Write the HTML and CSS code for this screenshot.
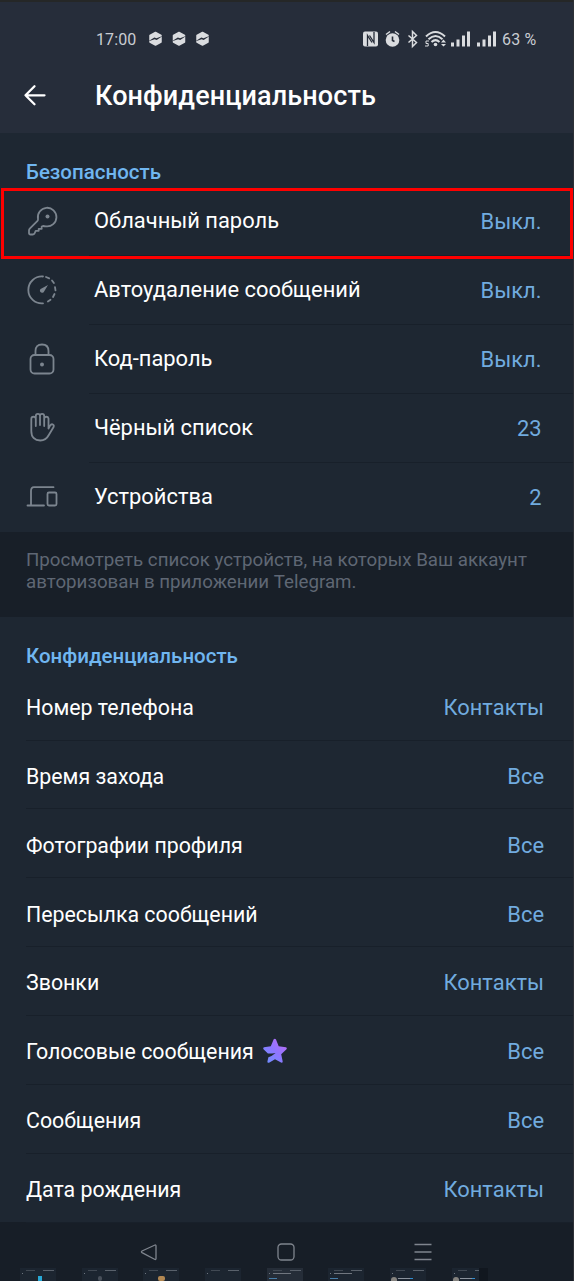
FILE: index.html
```
<!DOCTYPE html>
<html lang="ru">
<head>
<meta charset="utf-8">
<title>Конфиденциальность</title>
<link rel="stylesheet" href="styles.css">
</head>
<body>
<main class="screen">
  <header class="top">
    <div class="status">
      <span class="clock">17:00</span>
      <svg class="notices" width="64" height="16" viewBox="0 0 64 16">
        <defs><g id="notice"><path d="M7.500 1.500l5.500 3v6.500l-5.500 3-5.500-3v-6.500z" fill="#dadcdf" stroke="#dadcdf" stroke-width="1.500" stroke-linejoin="round"/><path d="M0 10.600L6.300 6.500 8.500 7.300 15 4.700 8.700 9 6.600 8.200z" fill="#262c38"/></g></defs>
        <use href="#notice"/><use href="#notice" x="23.500"/><use href="#notice" x="47"/>
      </svg>
      <svg class="signals" width="136" height="20" viewBox="0 0 136 20">
        <g fill="#dadcdf">
          <rect x="1" y="2.500" width="15" height="15" rx="2"/>
          <circle cx="30.500" cy="11" r="6.800"/>
          <g id="bars"><rect x="89" y="13.500" width="3" height="4"/><rect x="94.500" y="10.500" width="3" height="7"/><rect x="100" y="6.500" width="3" height="11"/><rect x="105" y="2.500" width="3" height="15"/></g>
          <use href="#bars" x="26"/>
          <circle cx="73.500" cy="15.500" r="1.800"/>
          <path d="M79 13.500l2.500-3 2.500 3zM79 15h5L81.500 17.500z"/>
        </g>
        <path d="M5.500 17V6.500l4.500 7M12 3v10.500L7.500 6.500" fill="none" stroke="#262c38" stroke-width="1.300"/>
        <path d="M30.500 7.500v4l2 1" fill="none" stroke="#262c38" stroke-width="1.600"/>
        <g fill="none" stroke="#dadcdf" stroke-width="1.500">
          <path d="M24 5.500l4-3M33 2.500l4 3M46.500 6.500l8 7-4 4v-15l4 4-8 7"/>
          <path d="M64 7.500q9.500-9 19 0M66.500 10.200q7-6.500 14 0M69.500 13q4-3.700 8 0" stroke-width="2"/>
          <path d="M67 12h-3v2.500h2.200V17H63" stroke-width="1"/>
        </g>
      </svg>
      <span class="charge">63 %</span>
    </div>
    <div class="bar">
      <svg class="back" width="24" height="24" viewBox="0 0 24 24"><path d="M22.500 12.300H3.500M12.500 3.300L3.500 12.300l9 9" fill="none" stroke="#fff" stroke-width="2.300" stroke-linecap="round" stroke-linejoin="round"/></svg>
      <h1 class="title">Конфиденциальность</h1>
    </div>
  </header>

  <section class="group security">
    <h2 class="heading">Безопасность</h2>
    <div class="row marked"><svg class="icon" viewBox="0 0 34 34"><path d="M4 29v-2.500q0-1.200 1-2.200l7.500-7.500q.7-.7.500-2A9.300 9.300 0 1 1 21 22.300q-1.500 0-3-.3l-1.300.5v2.300h-3v2h-3l-1.200 2.700q-.6 1-1.800 1H5.500q-1.500 0-1.500-1.500z"/><circle class="dot" cx="22.500" cy="12.500" r="2"/></svg><span class="label">Облачный пароль</span><span class="value">Выкл.</span></div>
    <div class="row"><svg class="icon" viewBox="0 0 34 34"><path d="M18 3.500A13.500 13.500 0 1 0 18 30.400"/><path d="M21 4l3.200 1.300M27 7.500l1.900 2.500M30 14.200l.5 3.200M29.500 21l-1.500 3M25.500 26.700l-2.600 1.800"/><path class="dot" d="M23 12l-6.500 3.400a2.200 2.200 0 1 0 2.600 3z"/></svg><span class="label">Автоудаление сообщений</span><span class="value">Выкл.</span></div>
    <div class="row"><svg class="icon" viewBox="0 0 34 34"><rect x="5.500" y="13" width="23" height="18.500" rx="4"/><path d="M10.500 13V9q0-6.500 6.500-6.500T23.500 9v4"/><circle class="dot" cx="17" cy="22.500" r="2"/></svg><span class="label">Код-пароль</span><span class="value">Выкл.</span></div>
    <div class="row"><svg class="icon" viewBox="0 0 34 34"><path d="M10.800 15V8a2.200 2.200 0 0 0-4.500 0V20c0 6.500 3.500 9.500 9 9.500 4.500 0 6.500-1.700 8.500-5.500l4.800-8q.8-2-1-2.700-1.500-.4-2.500 1.300L23.500 17.500V7.500a2.200 2.200 0 0 0-4.300 0V15M10.800 14V5a2.100 2.100 0 0 1 4.200 0v9M15 5a2.100 2.100 0 0 1 4.200 0v9"/></svg><span class="label">Чёрный список</span><span class="value">23</span></div>
    <div class="row"><svg class="icon" viewBox="0 0 34 34"><path d="M2.500 25.500H19M6 25.500V11q0-3.800 3-3.800h19.500"/><rect x="22.500" y="12.500" width="9" height="13" rx="1.500"/></svg><span class="label">Устройства</span><span class="value">2</span></div>
  </section>

  <p class="note">Просмотреть список устройств, на которых Ваш аккаунт<br>авторизован в приложении Telegram.</p>

  <section class="group privacy">
    <h2 class="heading">Конфиденциальность</h2>
    <div class="row"><span class="label">Номер телефона</span><span class="value">Контакты</span></div>
    <div class="row"><span class="label">Время захода</span><span class="value">Все</span></div>
    <div class="row"><span class="label">Фотографии профиля</span><span class="value">Все</span></div>
    <div class="row"><span class="label">Пересылка сообщений</span><span class="value">Все</span></div>
    <div class="row"><span class="label">Звонки</span><span class="value">Контакты</span></div>
    <div class="row"><span class="label">Голосовые сообщения</span>
      <svg class="star" width="26" height="26" viewBox="0 0 26 26"><defs><linearGradient id="premium" x1="0" y1="1" x2="1" y2="0"><stop offset="0" stop-color="#6b93ff"/><stop offset=".5" stop-color="#8f76ff"/><stop offset="1" stop-color="#c36af2"/></linearGradient></defs><path d="M11.700 1.200q1.300-1.200 2.300.3l2.700 6.800 7.200.9q1.700.6.600 2l-5.300 5 1.500 7.200q0 1.700-1.700 1.200L13 21.200l-6 3.500q-1.800.5-1.600-1.200l1-4.300q3.600-1 7.200-4.200-4 .7-7.700.6L1.500 11.200q-1-1.400.5-2l6.800-.9z" fill="url(#premium)"/></svg>
      <span class="value">Все</span></div>
    <div class="row"><span class="label">Сообщения</span><span class="value">Все</span></div>
    <div class="row"><span class="label">Дата рождения</span><span class="value">Контакты</span></div>
  </section>

  <footer class="nav">
    <div class="buttons">
      <svg width="18" height="18" viewBox="0 0 18 18"><path d="M15 2L2 8q-1.200.8 0 1.600L15 16.500q1 .3 1-1V3q0-1.300-1-1z"/></svg>
      <svg width="18" height="18" viewBox="0 0 18 18"><rect x="1" y="1" width="16" height="16" rx="3.500"/></svg>
      <svg width="18" height="18" viewBox="0 0 18 18"><path d="M0.500 1.500h17M.5 9h17M.5 16.500h17"/></svg>
    </div>
    <div class="thumbs">
      <i class="thumb"><b class="pic phone"></b></i>
      <i class="thumb"><b class="pic lock"></b></i>
      <i class="thumb"><b class="pic bear"></b></i>
      <i class="thumb"></i>
      <i class="thumb lit"><b class="line"></b></i>
      <i class="thumb"><b class="line"></b></i>
      <i class="thumb"><b class="avatar"></b></i>
      <i class="thumb menu"><b class="avatar"></b></i>
    </div>
  </footer>
</main>
</body>
</html>
```
FILE: styles.css
```
* { box-sizing: border-box; }
body { margin: 0; background: #1e2732; font-family: Roboto, "Noto Sans", sans-serif; }
.screen { width: 574px; height: 1281px; overflow: hidden; display: flex; flex-direction: column; border-right: 1px solid #2d3036; }
.top { flex: none; height: 133px; background: #262d3a; border-top: 2px solid #252727; }
.status { display: flex; align-items: center; height: 36px; margin-top: 19px; padding-left: 96px; color: #c9ccd2; font-size: 16px; }
.clock { width: 41px; letter-spacing: .1px; }
.notices { margin-left: 11px; }
.signals { margin-left: 150px; }
.charge { margin-left: 4px; letter-spacing: .2px; white-space: nowrap; }
.bar { display: flex; align-items: center; height: 36px; margin-top: 20px; padding-left: 22px; }
.title { margin: 0 0 0 49px; padding-top: 1px; color: #fff; font-size: 27px; font-weight: 500; line-height: 36px; letter-spacing: .1px; white-space: nowrap; }
.group { flex: none; background: #1e2732; }
.heading { margin: 0; padding-left: 26px; color: #70b6f0; font-size: 20.500px; font-weight: 500; line-height: 24px; }
.security { height: 398.500px; padding-top: 27px; }
.security .heading { height: 27px; }
.privacy { height: 605px; padding-top: 27px; }
.privacy .heading { height: 27.800px; }
.row { position: relative; display: flex; align-items: center; height: 68.850px; padding: 0 29px 0 26px; }
.security .row { padding-right: 31.500px; }
.privacy .row { padding-top: 3.500px; }
.row::after { content: ""; position: absolute; left: 26px; right: 0; bottom: 0; height: 1px; background: #18202a; }
.security .row::after { left: 89px; bottom: -.5px; }
.security .row:last-child::after { display: none; }
.marked::before { content: ""; position: absolute; left: 1px; right: 0; top: 1px; bottom: -3px; border: 3px solid #fe0000; z-index: 1; }
.security .marked::after { right: 3px; }
.icon { width: 34px; height: 34px; margin: 0 35px 0 -1px; fill: none; stroke: #7c858f; stroke-width: 1.800; stroke-linecap: round; stroke-linejoin: round; }
.icon .dot { fill: #7c858f; stroke: none; }
.label { color: #fff; font-size: 21.900px; line-height: 28px; white-space: nowrap; }
.privacy .label { font-size: 21.350px; }
.value { margin-left: auto; color: #71abdf; font-size: 21.900px; line-height: 28px; white-space: nowrap; }
.security .value { padding-top: 2px; }
.star { margin: -2px 0 0 8.500px; }
.note { flex: none; height: 85.500px; margin: 0; padding: 17px 0 0 26px; background: #181f28; color: #5f6774; font-size: 18.730px; line-height: 22px; white-space: nowrap; }
.nav { flex: none; height: 59px; background: #171e27; }
.buttons { display: flex; gap: 119px; height: 46px; padding: 21px 0 0 139.500px; }
.buttons svg { fill: none; stroke: #7f858e; stroke-width: 1.300; }
.thumbs { display: flex; gap: 25.700px; padding-left: 20px; }
.thumb { position: relative; width: 36px; height: 13px; background: linear-gradient(90deg, transparent 6px, #414953 6px 15px, transparent 15px 23px, #59616b 23px 34px, transparent 34px) 0 2px / 100% 1px no-repeat, linear-gradient(#6d757f, #6d757f) 2px 5px / 1px 1px no-repeat, #1c2530; }
.thumb.lit { background-color: #252d38; }
.pic { position: absolute; left: 15px; top: 8px; width: 7px; height: 5px; }
.phone { background: linear-gradient(90deg, #20262b 3px, #28a8d6 3px); }
.lock { left: 16px; width: 4px; border-radius: 2px; background: #48505a; }
.bear { border-radius: 2px; background: #b18752; }
.line { position: absolute; left: 6px; top: 5px; width: 18px; height: 1px; background: #70767f; }
.line::after { content: ""; position: absolute; left: -4px; top: 5px; width: 8px; height: 1px; background: #477da8; }
.avatar { position: absolute; left: 1px; top: 9px; width: 6px; height: 4px; border-radius: 3px 3px 0 0; background: #85837f; }
.avatar::after { content: ""; position: absolute; left: 7px; top: 1px; width: 15px; height: 1px; background: linear-gradient(90deg, #8b929c 12px, #318ccf 12px); }
.menu::after { content: ""; position: absolute; right: 0; top: 0; width: 9px; height: 13px; background: #11171f; }
```
